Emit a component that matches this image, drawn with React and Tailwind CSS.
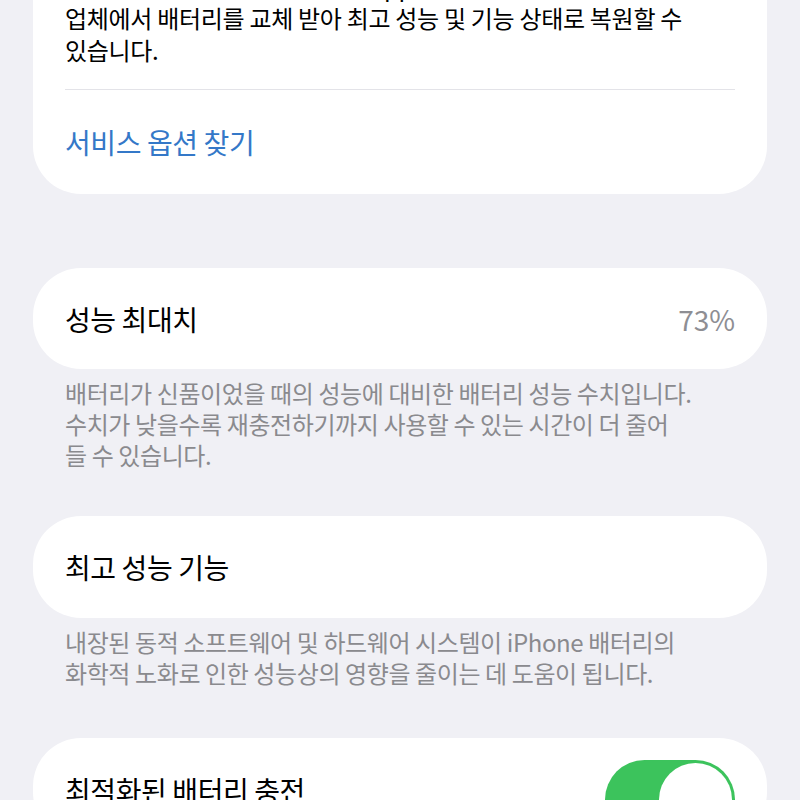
import { useState } from "react";

const font = { fontFamily: '"Noto Sans CJK KR", "Noto Sans", sans-serif' };

function Toggle({ on, onChange }) {
  return (
    <button
      onClick={() => onChange(!on)}
      className={`relative w-[130px] h-[79px] rounded-full shrink-0 transition-colors ${on ? "bg-[#3cc35c]" : "bg-[#e5e5ea]"}`}
    >
      <span
        className={`absolute top-[3px] h-[73px] w-[73px] rounded-full bg-white transition-all ${on ? "left-[54px]" : "left-[3px]"}`}
      />
    </button>
  );
}

function Footer({ children }) {
  return (
    <p className="px-[65px] pt-[8px] text-[24px] leading-[31px] text-[#8a8a8e] tracking-[-0.4px]">
      {children}
    </p>
  );
}

export default function App() {
  const [optimized, setOptimized] = useState(true);

  return (
    <div className="h-[800px] overflow-hidden bg-[#f0f0f5]" style={font}>
      {/* 배터리 서비스 안내 카드 */}
      <div className="mx-[33px] -mt-[34px] rounded-b-[48px] bg-white">
        <div className="px-[32px] pt-[4px] pb-[23px] text-[24px] leading-[32px] text-black tracking-[-0.3px]">
          <p>배터리 성능이 저하되었습니다. Apple 공인 서비스 제공</p>
          <p>업체에서 배터리를 교체 받아 최고 성능 및 기능 상태로 복원할 수</p>
          <p>있습니다.</p>
        </div>
        <div className="mx-[32px] h-px bg-[#e3e3e8]" />
        <div className="flex h-[104px] items-center px-[32px] text-[28px] text-[#3478c8] tracking-[-0.4px]">
          서비스 옵션 찾기
        </div>
      </div>

      {/* 성능 최대치 */}
      <div className="mx-[33px] mt-[74px] flex h-[101px] items-center justify-between rounded-[48px] bg-white px-[32px] text-[28px]">
        <span className="text-black tracking-[-0.4px]">성능 최대치</span>
        <span className="text-[#8e8e93]">73%</span>
      </div>
      <Footer>
        배터리가 신품이었을 때의 성능에 대비한 배터리 성능 수치입니다.
        <br />
        수치가 낮을수록 재충전하기까지 사용할 수 있는 시간이 더 줄어
        <br />
        들 수 있습니다.
      </Footer>

      {/* 최고 성능 기능 */}
      <div className="mx-[33px] mt-[46px] flex h-[102px] items-center rounded-[48px] bg-white px-[32px] text-[28px] text-black tracking-[-0.4px]">
        최고 성능 기능
      </div>
      <Footer>
        내장된 동적 소프트웨어 및 하드웨어 시스템이 iPhone 배터리의
        <br />
        화학적 노화로 인한 성능상의 영향을 줄이는 데 도움이 됩니다.
      </Footer>

      {/* 최적화된 배터리 충전 */}
      <div className="mx-[33px] mt-[50px] flex h-[102px] items-start justify-between rounded-[48px] bg-white px-[32px] text-[28px] text-black tracking-[-0.4px]">
        <span className="mt-[31px]">최적화된 배터리 충전</span>
        <div className="mt-[22px]">
          <Toggle on={optimized} onChange={setOptimized} />
        </div>
      </div>
    </div>
  );
}
